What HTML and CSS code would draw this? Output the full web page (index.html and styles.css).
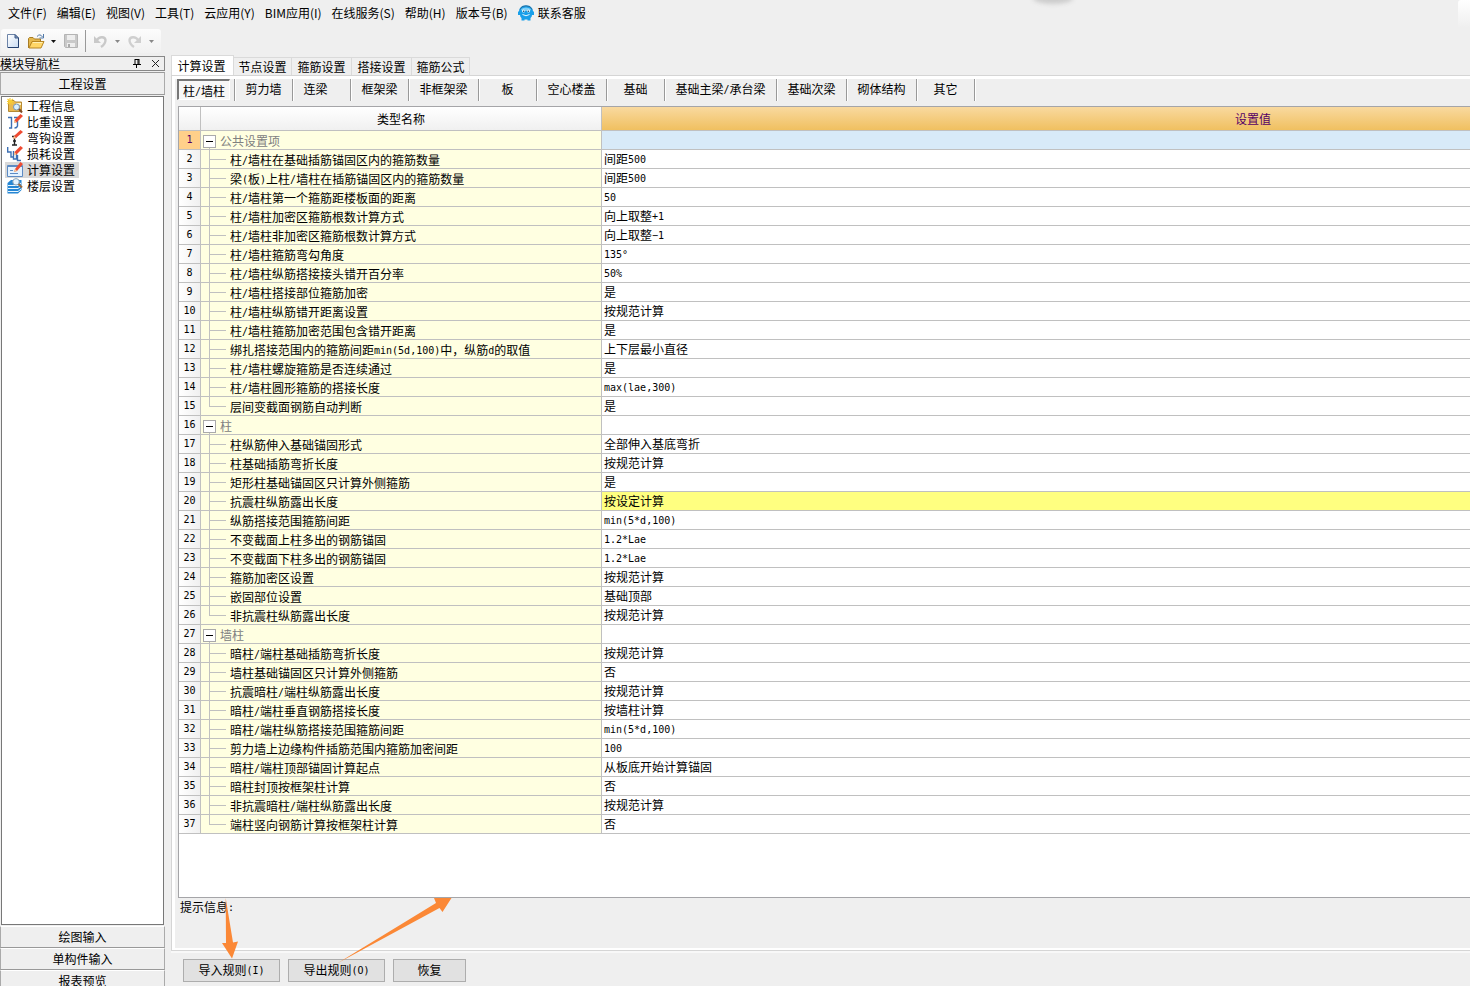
FILE: index.html
```html
<!DOCTYPE html>
<html lang="zh-CN">
<head>
<meta charset="utf-8">
<title>计算设置</title>
<link rel="stylesheet" href="styles.css">
</head>
<body>
<div class="app">
<span class="top-shadow"></span><span class="top-corner"></span>
<nav class="menu">
<button>文件(F)</button><button>编辑(E)</button><button>视图(V)</button><button>工具(T)</button><button>云应用(Y)</button><button>BIM应用(I)</button><button>在线服务(S)</button><button>帮助(H)</button><button>版本号(B)</button>
<button class="service"><svg width="16" height="16" viewBox="0 0 16 16"><path d="M1 6Q2 0 8 .5Q14 0 15 6L16 7V10L14 10Q14 12 12.500 13V15.500H9.500V14.500H6.500V15.500H3.500V13Q2 12 2 10L0 10V7Z" fill="#189fe9"/><path d="M2 4.500Q3 .8 8 .8T14 4.500" fill="none" stroke="#2a6f9e"/><path d="M3 4Q8 1 13 4L12 6H4Z" fill="#7fd0f8"/><circle cx="5.500" cy="6" r="1.500" fill="#e8faff"/><circle cx="10.500" cy="6" r="1.500" fill="#e8faff"/><circle cx="5.700" cy="6.200" r=".8" fill="#164b70"/><circle cx="10.300" cy="6.200" r=".8" fill="#164b70"/><path d="M4.500 9.500Q8 12 11.500 9.500" fill="none" stroke="#e6f7ff"/></svg>联系客服</button>
</nav>
<div class="toolbar">
<button aria-label="新建"><svg width="12" height="14" viewBox="0 0 12 14"><defs><linearGradient id="page" x2="1" y2="1"><stop stop-color="#fff"/><stop offset="1" stop-color="#c9dcf3"/></linearGradient></defs><path d="M.5 .5H8L11.500 4V13.500H.5Z" fill="url(#page)" stroke="#6d84a8"/><path d="M11.500 4V13.500H1" fill="none" stroke="#23406f"/><path d="M8 .5V4H11.500Z" fill="#7d98be" stroke="#425c88"/></svg></button>
<button class="open" aria-label="打开"><svg width="17" height="15" viewBox="0 0 17 15"><path d="M.5 14V4.500L1.500 3.500H5L6.500 5H12.500V8" fill="#e6b84c" stroke="#a77c25"/><path d="M1 14L4 7.500H16L13 14Z" fill="#ffd667" stroke="#b78522"/><path d="M5 8.500H14.500" stroke="#fff0b5"/><path d="M9 2.500Q12-1 14.500 3M15.500 0V4H11.500" fill="none" stroke="#5279a8"/></svg></button>
<button class="drop" aria-label="打开选项"><svg width="5" height="3"><path d="M0 0H5L2.500 3Z" fill="#111"/></svg></button>
<button class="save" aria-label="保存"><svg width="14" height="14" viewBox="0 0 14 14"><path d="M.5 .5H13.500V13.500H1.500L.5 12.500Z" fill="#c9c9c9" stroke="#b4b4b4"/><path d="M3 1H11V6H3Z" fill="#eee"/><path d="M3 9H11V13H3Z" fill="#eee"/><path d="M4 10H6V13H4Z" fill="#aaa"/></svg></button>
<span class="rule"></span>
<button class="undo" aria-label="撤销"><svg width="13" height="13" viewBox="0 0 13 13"><path d="M3 5C5 1.500 11 1 11.500 5Q11.500 9 7 12" fill="none" stroke="#c9c9c9" stroke-width="2.400"/><path d="M0 1V8H7Z" fill="#c9c9c9"/></svg></button>
<button class="drop2" aria-label="撤销选项"><svg width="5" height="3"><path d="M0 0H5L2.500 3Z" fill="#888"/></svg></button>
<button class="redo" aria-label="重做"><svg width="13" height="13" viewBox="0 0 13 13"><path d="M10 5C8 1.500 2 1 1.500 5Q1.500 9 6 12" fill="none" stroke="#cfcfcf" stroke-width="2.400"/><path d="M13 1V8H6Z" fill="#cfcfcf"/></svg></button>
<button class="drop2" aria-label="重做选项"><svg width="5" height="3"><path d="M0 0H5L2.500 3Z" fill="#888"/></svg></button>
</div>
<div class="body">
<aside class="side">
<div class="side-title"><span>模块导航栏</span><button aria-label="固定"><svg width="8" height="9" viewBox="0 0 8 9"><path d="M2 0V5M5 0V5M6 0V5M2 .5H6M0 5.500H8M3.500 6V9" fill="none" stroke="#000"/></svg></button><button aria-label="关闭"><svg width="9" height="9" viewBox="0 0 9 9"><path d="M1 1L8 8M8 1L1 8" stroke="#222"/></svg></button></div>
<button class="bar first">工程设置</button>
<div class="tree">
<button><svg width="16" height="16" viewBox="0 0 16 16"><path d="M1.500 2.500H7L8.500 4H14.500V13.500H1.500Z" fill="#e9b850" stroke="#b58a35"/><path d="M9 5H14V7H9Z" fill="#fff3c8"/><path d="M3 0V7M0 3.500H7M.5 1L6 6M6 1L.5 6" stroke="#f6cc35" stroke-width="1.200"/><circle cx="9.500" cy="9" r="3" fill="#d9efff" stroke="#7795b2"/><path d="M12 11L15 14.500" stroke="#7e4e27" stroke-width="2"/></svg>工程信息</button>
<button><svg width="16" height="16" viewBox="0 0 16 16"><path d="M1 3.500H4.500V14H2M7 3.500H10.500V12Q10 14 7.500 14" fill="none" stroke="#3e70b4" stroke-width="1.400"/><path d="M7 9L7.500 6L13.500 0L16 2L9.500 8.500Z" fill="#ef4b32"/><path d="M7 9L7.500 6L9.500 8.500Z" fill="#f4d5a1"/></svg>比重设置</button>
<button><svg width="16" height="16" viewBox="0 0 16 16"><path d="M5 6.500H10M7.500 7V15M5 15H10M6 11H9" stroke="#222" stroke-width="1.400"/><path d="M6 9L7 6L13.500 0L16 2L9 8Z" fill="#ef4b32"/><path d="M6 9L7 6L9 8Z" fill="#f4d5a1"/></svg>弯钩设置</button>
<button><svg width="16" height="16" viewBox="0 0 16 16"><path d="M.7 1V6H4V11H6.500M6.500 5V13H9.500V8M10.500 9V14.500H14" fill="none" stroke="#3e70b4" stroke-width="1.400"/><path d="M7 9L7.500 6L13.500 0L16 2L9.500 8.500Z" fill="#ef4b32"/><path d="M7 9L7.500 6L9.500 8.500Z" fill="#f4d5a1"/></svg>损耗设置</button>
<button class="selected"><svg width="16" height="16" viewBox="0 0 16 16"><path d="M.5 3.500H15.500V14.500H.5Z" fill="#e4f2ff" stroke="#5d8bc4"/><path d="M1 4H15" stroke="#5d8bc4" stroke-width="2"/><path d="M3 8.500H6M3 11.500H11" stroke="#5d8bc4"/><path d="M7 10L8 7L13.500 0L16 2L10 9Z" fill="#ef4b32"/><path d="M7 10L8 7L10 9Z" fill="#f4d5a1"/></svg>计算设置</button>
<button><svg width="16" height="16" viewBox="0 0 16 16"><path d="M.5 5L4 2H14.500V12L11 15.500H.5Z" fill="#2586d4"/><path d="M1 7.500H11L14 5M1 10.500H11L14 8M1 13.500H11L14 11" fill="none" stroke="#e9f7ff"/><circle cx="9" cy="3.800" r="3.200" fill="#e3f3ff" stroke="#8ca5b8"/><path d="M11.500 6L15 9.500" stroke="#9a6a42" stroke-width="2"/></svg>楼层设置</button>
</div>
<button class="bar">绘图输入</button><button class="bar">单构件输入</button><button class="bar">报表预览</button>
</aside>
<main class="main">
<div class="tabs"><button class="active">计算设置</button><button class="narrow">节点设置</button><button>箍筋设置</button><button>搭接设置</button><button class="narrow">箍筋公式</button></div>
<section class="panel">
<div class="kinds"><div><button class="active">柱<span class="m">/</span>墙柱</button></div><div><button>剪力墙</button></div><div class="lean"><button>连梁</button></div><div><button>框架梁</button></div><div class="w70"><button>非框架梁</button></div><div><button>板</button></div><div class="w70"><button>空心楼盖</button></div><div><button>基础</button></div><div class="w112"><button>基础主梁<span class="m">/</span>承台梁</button></div><div class="w70"><button>基础次梁</button></div><div class="w70"><button>砌体结构</button></div><div><button>其它</button></div></div>
<div class="sheet">
<table>
<colgroup><col class="c-num"><col class="c-name"><col></colgroup>
<thead><tr><th></th><th>类型名称</th><th class="value-head"><span>设置值</span></th></tr></thead>
<tbody>
<tr class="group current"><th>1</th><td><button aria-label="折叠"></button>公共设置项</td><td></td></tr>
<tr><th>2</th><td>柱<span class="m">/</span>墙柱在基础插筋锚固区内的箍筋数量</td><td>间距<span class="m">500</span></td></tr>
<tr><th>3</th><td>梁<span class="m">(</span>板<span class="m">)</span>上柱<span class="m">/</span>墙柱在插筋锚固区内的箍筋数量</td><td>间距<span class="m">500</span></td></tr>
<tr><th>4</th><td>柱<span class="m">/</span>墙柱第一个箍筋距楼板面的距离</td><td><span class="m">50</span></td></tr>
<tr><th>5</th><td>柱<span class="m">/</span>墙柱加密区箍筋根数计算方式</td><td>向上取整<span class="m">+1</span></td></tr>
<tr><th>6</th><td>柱<span class="m">/</span>墙柱非加密区箍筋根数计算方式</td><td>向上取整<span class="m">−1</span></td></tr>
<tr><th>7</th><td>柱<span class="m">/</span>墙柱箍筋弯勾角度</td><td><span class="m">135°</span></td></tr>
<tr><th>8</th><td>柱<span class="m">/</span>墙柱纵筋搭接接头错开百分率</td><td><span class="m">50%</span></td></tr>
<tr><th>9</th><td>柱<span class="m">/</span>墙柱搭接部位箍筋加密</td><td>是</td></tr>
<tr><th>10</th><td>柱<span class="m">/</span>墙柱纵筋错开距离设置</td><td>按规范计算</td></tr>
<tr><th>11</th><td>柱<span class="m">/</span>墙柱箍筋加密范围包含错开距离</td><td>是</td></tr>
<tr><th>12</th><td>绑扎搭接范围内的箍筋间距<span class="m">min(5d,100)</span>中，纵筋<span class="m">d</span>的取值</td><td>上下层最小直径</td></tr>
<tr><th>13</th><td>柱<span class="m">/</span>墙柱螺旋箍筋是否连续通过</td><td>是</td></tr>
<tr><th>14</th><td>柱<span class="m">/</span>墙柱圆形箍筋的搭接长度</td><td><span class="m">max(lae,300)</span></td></tr>
<tr class="last"><th>15</th><td>层间变截面钢筋自动判断</td><td>是</td></tr>
<tr class="group"><th>16</th><td><button aria-label="折叠"></button>柱</td><td></td></tr>
<tr><th>17</th><td>柱纵筋伸入基础锚固形式</td><td>全部伸入基底弯折</td></tr>
<tr><th>18</th><td>柱基础插筋弯折长度</td><td>按规范计算</td></tr>
<tr><th>19</th><td>矩形柱基础锚固区只计算外侧箍筋</td><td>是</td></tr>
<tr class="changed"><th>20</th><td>抗震柱纵筋露出长度</td><td>按设定计算</td></tr>
<tr><th>21</th><td>纵筋搭接范围箍筋间距</td><td><span class="m">min(5*d,100)</span></td></tr>
<tr><th>22</th><td>不变截面上柱多出的钢筋锚固</td><td><span class="m">1.2*Lae</span></td></tr>
<tr><th>23</th><td>不变截面下柱多出的钢筋锚固</td><td><span class="m">1.2*Lae</span></td></tr>
<tr><th>24</th><td>箍筋加密区设置</td><td>按规范计算</td></tr>
<tr><th>25</th><td>嵌固部位设置</td><td>基础顶部</td></tr>
<tr class="last"><th>26</th><td>非抗震柱纵筋露出长度</td><td>按规范计算</td></tr>
<tr class="group"><th>27</th><td><button aria-label="折叠"></button>墙柱</td><td></td></tr>
<tr><th>28</th><td>暗柱<span class="m">/</span>端柱基础插筋弯折长度</td><td>按规范计算</td></tr>
<tr><th>29</th><td>墙柱基础锚固区只计算外侧箍筋</td><td>否</td></tr>
<tr><th>30</th><td>抗震暗柱<span class="m">/</span>端柱纵筋露出长度</td><td>按规范计算</td></tr>
<tr><th>31</th><td>暗柱<span class="m">/</span>端柱垂直钢筋搭接长度</td><td>按墙柱计算</td></tr>
<tr><th>32</th><td>暗柱<span class="m">/</span>端柱纵筋搭接范围箍筋间距</td><td><span class="m">min(5*d,100)</span></td></tr>
<tr><th>33</th><td>剪力墙上边缘构件插筋范围内箍筋加密间距</td><td><span class="m">100</span></td></tr>
<tr><th>34</th><td>暗柱<span class="m">/</span>端柱顶部锚固计算起点</td><td>从板底开始计算锚固</td></tr>
<tr><th>35</th><td>暗柱封顶按框架柱计算</td><td>否</td></tr>
<tr><th>36</th><td>非抗震暗柱<span class="m">/</span>端柱纵筋露出长度</td><td>按规范计算</td></tr>
<tr class="last"><th>37</th><td>端柱竖向钢筋计算按框架柱计算</td><td>否</td></tr>
</tbody>
</table>
</div>
<div class="hint">提示信息<span class="m">:</span></div>
</section>
<footer class="actions"><button>导入规则<span class="m">(I)</span></button><button>导出规则<span class="m">(O)</span></button><button class="short">恢复</button></footer>
<svg class="arrows" width="236" height="70" viewBox="220 896 236 70"><path d="M225.700 898L233 942.500L238 941.500L232 958.500L222 943H226ZM337 963.500L436 903L434 898H451.500L442.500 912L439.500 908Z" fill="#fb8836"/></svg>
</main>
</div>
</div>
</body>
</html>
```
FILE: styles.css
```css
* { box-sizing: border-box; }
body {
  margin: 0;
  background: #efefef;
  color: #000;
  font: 12px/18px "Noto Sans CJK SC", sans-serif;
}
button {
  margin: 0;
  padding: 0;
  border: 0;
  background: none;
  color: inherit;
  font: inherit;
  white-space: nowrap;
}
svg { display: block; flex: none; }
.m {
  font-family: "DejaVu Sans Mono", monospace;
  font-size: 10px;
  line-height: 1;
  vertical-align: 1px;
}
.app {
  position: relative;
  display: flex;
  flex-direction: column;
  height: 100vh;
  overflow: hidden;
}
.top-shadow {
  position: absolute;
  top: -8px;
  left: 70%;
  width: 40px;
  height: 12px;
  margin-left: 4px;
  border-radius: 50%;
  background: #ccc;
  filter: blur(2px);
}
.top-corner {
  position: absolute;
  top: 0;
  right: 0;
  width: 12px;
  height: 28px;
  border-top-left-radius: 3px;
  background: linear-gradient(#fff, #efefef);
}

/* Menu and toolbar */
.menu { display: flex; flex: none; gap: 10px; height: 29px; padding: 4px 8px 7px; }
.service { display: flex; align-items: center; gap: 4px; }
.toolbar {
  display: flex;
  flex: none;
  align-items: center;
  align-self: flex-start;
  width: 160px;
  height: 24px;
  margin-left: 1px;
  padding-left: 6px;
  border-radius: 3px;
  background: linear-gradient(#fcfcfc, #f1f1f1);
}
.toolbar .open { margin-left: 9px; }
.toolbar .drop { margin-left: 6px; }
.toolbar .save { margin-left: 8px; }
.rule { width: 1px; height: 22px; margin: 0 8px 0 7px; background: #999; }
.toolbar .drop2 { margin-left: 8px; }
.toolbar .redo { margin-left: 8px; }

/* Navigation column */
.body { display: flex; flex: 1; min-height: 0; padding-top: 2px; }
.side {
  display: flex;
  flex: none;
  flex-direction: column;
  width: 165px;
  margin: 1px 5px -6px 0;
}
.side-title {
  display: flex;
  flex: none;
  align-items: center;
  gap: 10px;
  height: 15px;
  padding-right: 4px;
  border: 1px solid #888;
  border-left: 0;
  line-height: 12px;
}
.side-title span { flex: 1; }
.bar {
  flex: none;
  height: 22px;
  border: 1px solid #aaa;
  border-top-color: #fff;
  border-bottom-color: #999;
  line-height: 20px;
}
.bar.first { height: 23px; margin-top: 1px; border-top-color: #999; }
.tree {
  display: flex;
  flex: 1;
  flex-direction: column;
  align-items: flex-start;
  min-height: 0;
  margin: 1px;
  padding: 1px 3px;
  border: 1px solid #777;
  background: #fff;
}
.tree button {
  display: flex;
  align-items: center;
  gap: 4px;
  height: 16px;
  padding: 0 4px 0 2px;
  line-height: 16px;
}
.tree .selected { background: #d9d9d9; }

/* Settings area */
.main { position: relative; display: flex; flex: 1; flex-direction: column; min-width: 0; }
.tabs { display: flex; flex: none; align-items: flex-end; height: 20px; padding-left: 1px; }
.tabs button {
  width: 60px;
  height: 18px;
  border: 1px solid #dadada;
  border-width: 1px 1px 0 0;
  line-height: 18px;
}
.tabs .narrow { width: 58px; }
.tabs .active { width: 63px; height: 20px; padding-right: 2px; border-left-width: 1px; background: #fff; }
.panel {
  display: flex;
  flex: 1;
  flex-direction: column;
  min-height: 0;
  margin-left: 1px;
  border: 1px solid #d5d5d5;
  border-right: 0;
  box-shadow: inset 3px 3px #fff, inset 0 -2px #fff, 0 2px #f8f8f8;
}
.kinds { display: flex; flex: none; height: 25px; margin: 3px 0 0 5px; }
.kinds div { flex: none; width: 58px; height: 22px; padding-bottom: 2px; border-right: 1px solid #999; box-shadow: 1px 0 #fff; }
.kinds div button { width: 100%; height: 100%; }
.kinds .w70 { width: 70px; }
.kinds .w112 { width: 112px; }
.kinds .lean { padding-right: 12px; }
.kinds div .active {
  width: 53px;
  height: 21px;
  border: 1px solid #fff;
  border-top: 2px solid #777;
  border-left: 2px solid #777;
  background: #f7f7f7;
  line-height: 17px;
}
.sheet {
  flex: 1;
  min-height: 0;
  margin: 2px 0 0 6px;
  overflow: hidden;
  border: 1px solid #a5a5a8;
  border-right: 0;
  background: #fff;
}
table { width: 100%; border-spacing: 0; table-layout: fixed; }
.c-num { width: 22px; }
.c-name { width: 401px; }
th, td {
  height: 19px;
  padding: 0;
  border: 1px solid #c0c0c0;
  border-width: 0 1px 1px 0;
  font-weight: 400;
  line-height: 18px;
  white-space: nowrap;
}
thead th { height: 24px; background: linear-gradient(#fff, #f0f0f0); line-height: 22px; }
thead .value-head { border-right: 0; background: linear-gradient(#f9d99f, #f0c060); color: #506; }
.value-head span { display: block; padding-left: 50%; }
tbody th {
  background: linear-gradient(90deg, #fff, #f0f0f0);
  font: 10px/18px "DejaVu Sans Mono", monospace;
}
td:nth-child(2) {
  padding: 1px 0 0 29px;
  background:
    linear-gradient(#c0c0c0, #c0c0c0) 8px 0 / 1px 100% no-repeat,
    linear-gradient(#c0c0c0, #c0c0c0) 8px 9px / 17px 1px no-repeat,
    #ffffe1;
  line-height: 17px;
}
td:nth-child(3) { padding-left: 2px; border-right: 0; }
.last td:nth-child(2) { background-size: 1px 9px, 17px 1px, auto; }
.group td:nth-child(2) {
  padding-left: 2px;
  background:
    linear-gradient(#c0c0c0, #c0c0c0) 8px 100% / 1px 4px no-repeat,
    #ffffe1;
  color: #808080;
}
.group button {
  width: 13px;
  height: 13px;
  margin-right: 4px;
  border: 1px solid #aaa;
  background: linear-gradient(#000, #000) center / 7px 1px no-repeat, #fff;
  vertical-align: -1px;
}
.current th { background: #ffd08a; color: #506; }
.current td:nth-child(3) { background: #d8eaf8; }
.changed td:nth-child(3) { background: #ffff80; }
.hint { flex: none; height: 52px; padding: 0 8px; line-height: 18px; }
.actions { display: flex; flex: none; gap: 8px; height: 35px; padding: 8px 13px 4px; }
.actions button { width: 97px; padding-bottom: 2px; border: 1px solid #adadad; background: #e1e1e1; }
.actions .short { width: 73px; }
.arrows { position: absolute; bottom: 20px; left: 50px; pointer-events: none; }
```
